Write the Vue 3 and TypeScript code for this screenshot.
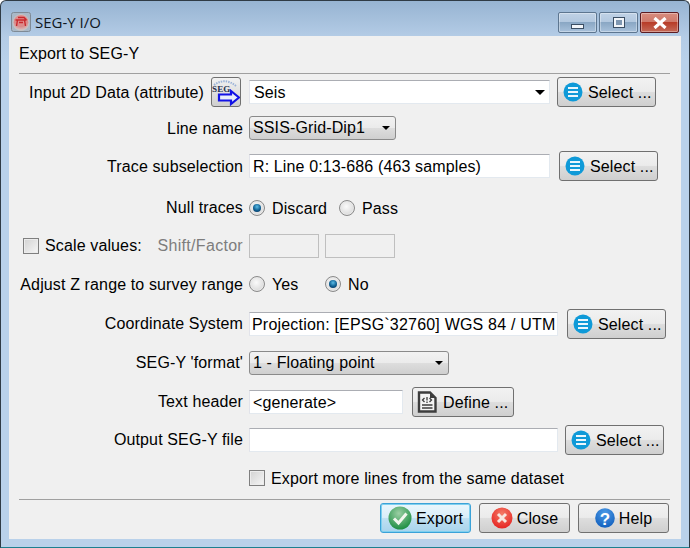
<script setup lang="ts">
const title = 'SEG-Y I/O'
</script>

<template>
  <div class="window">
    <header class="titlebar">
      <svg class="app-icon" width="20" height="20" viewBox="0 0 20 20">
        <defs>
          <radialGradient id="gApp" cx="50%" cy="30%" r="75%">
            <stop offset="0" stop-color="#e88f8f" />
            <stop offset="0.6" stop-color="#d98a8a" />
            <stop offset="1" stop-color="#d6d6d6" />
          </radialGradient>
        </defs>
        <rect x="0.5" y="0.5" width="19" height="19" rx="2" fill="#a9b8c7" stroke="#7f8a95" />
        <circle cx="10" cy="10.5" r="8" fill="url(#gApp)" stroke="#c4c4c4" />
        <path d="M4.5 8 L15.5 8 M6.5 8 L5.5 14 M13.5 8 L14.5 14 M8 10.5 L12 10.5 M7 5.5 L13 5.5 L15.5 8" stroke="#c8282c" stroke-width="1.4" fill="none" />
      </svg>
      <span class="title">{{ title }}</span>
      <div class="win-buttons">
        <div class="wb">
          <span class="min-glyph"></span>
        </div>
        <div class="wb">
          <span class="max-glyph"></span>
        </div>
        <div class="wb close">
          <svg width="16" height="12" viewBox="0 0 16 12">
            <path d="M2.5 1 L13.5 11 M13.5 1 L2.5 11" stroke="#fff" stroke-width="3.2" />
          </svg>
        </div>
      </div>
    </header>

    <main class="content">
      <div class="heading">Export to SEG-Y</div>
      <hr class="sep" />

      <div class="row first">
        <div class="label">
          <span class="low">Input 2D Data (attribute)</span>
          <div class="seg-btn">
            <svg width="30" height="30" viewBox="0 0 30 30">
              <path d="M3 8 Q14 0 25 9" stroke="#9db4d8" stroke-width="2" stroke-dasharray="1.5 1" fill="none" />
              <text x="1" y="15" class="seg-text">SEG</text>
              <path d="M8 17.5 H20 V14 L28 20.5 L20 27 V23.5 H8 Z" fill="#e8eefc" stroke="#1212e6" stroke-width="2.2" />
            </svg>
          </div>
        </div>
        <div class="combo w301">
          <span>Seis</span>
          <i class="caret"></i>
        </div>
        <button class="btn sel m7">
          <svg class="ico" width="20" height="20" viewBox="0 0 20 20">
            <circle cx="10" cy="10" r="9.5" fill="#0f9ad8" />
            <path d="M5 6 H15 M5 10 H15 M5 14 H15" stroke="#eaf7fd" stroke-width="2.2" />
          </svg>
          <span>Select ...</span>
        </button>
      </div>

      <div class="row mt10">
        <div class="label"><span class="low">Line name</span></div>
        <div class="dropdown w147">
          <span>SSIS-Grid-Dip1</span>
          <i class="caret small"></i>
        </div>
      </div>

      <div class="row mt12">
        <div class="label"><span class="low">Trace subselection</span></div>
        <div class="input w301">R: Line 0:13-686 (463 samples)</div>
        <button class="btn sel m9">
          <svg class="ico" width="20" height="20" viewBox="0 0 20 20">
            <circle cx="10" cy="10" r="9.5" fill="#0f9ad8" />
            <path d="M5 6 H15 M5 10 H15 M5 14 H15" stroke="#eaf7fd" stroke-width="2.2" />
          </svg>
          <span>Select ...</span>
        </button>
      </div>

      <div class="row mt16">
        <div class="label">Null traces</div>
        <div class="radio on"></div>
        <span class="opt w67">Discard</span>
        <div class="radio"></div>
        <span class="opt">Pass</span>
      </div>

      <div class="row mt12">
        <div class="label split">
          <div class="check-wrap">
            <div class="check"></div>
            <span>Scale values:</span>
          </div>
          <span class="muted">Shift/Factor</span>
        </div>
        <div class="input off w70"></div>
        <div class="input off w70 m6"></div>
      </div>

      <div class="row mt12">
        <div class="label"><span class="low">Adjust Z range to survey range</span></div>
        <div class="radio"></div>
        <span class="opt w53">Yes</span>
        <div class="radio on"></div>
        <span class="opt">No</span>
      </div>

      <div class="row mt14">
        <div class="label">Coordinate System</div>
        <div class="input w309 clip">Projection: [EPSG`32760] WGS 84 / UTM</div>
        <button class="btn sel m9">
          <svg class="ico" width="20" height="20" viewBox="0 0 20 20">
            <circle cx="10" cy="10" r="9.5" fill="#0f9ad8" />
            <path d="M5 6 H15 M5 10 H15 M5 14 H15" stroke="#eaf7fd" stroke-width="2.2" />
          </svg>
          <span>Select ...</span>
        </button>
      </div>

      <div class="row mt13">
        <div class="label">SEG-Y 'format'</div>
        <div class="dropdown w200">
          <span>1 - Floating point</span>
          <i class="caret small"></i>
        </div>
      </div>

      <div class="row mt13">
        <div class="label">Text header</div>
        <div class="input w154">&lt;generate&gt;</div>
        <button class="btn def m9">
          <svg class="ico" width="24" height="24" viewBox="0 0 24 24">
            <path d="M4 2.5 H15 L20.5 8 V21.5 H4 Z" fill="#f4f4f4" stroke="#3d3d3d" stroke-width="2.4" />
            <path d="M15 2 V8 H21" fill="#3d3d3d" />
            <path d="M9.5 8 L7.5 10 L9.5 12 M14.5 8 L16.5 10 L14.5 12 M12 7 V10.5 M12 11.5 V13 M7 15 H17.5 M7 18 H17.5" stroke="#3d3d3d" stroke-width="1.3" fill="none" />
          </svg>
          <span>Define ...</span>
        </button>
      </div>

      <div class="row mt12">
        <div class="label">Output SEG-Y file</div>
        <div class="input w309"></div>
        <button class="btn sel m7">
          <svg class="ico" width="20" height="20" viewBox="0 0 20 20">
            <circle cx="10" cy="10" r="9.5" fill="#0f9ad8" />
            <path d="M5 6 H15 M5 10 H15 M5 14 H15" stroke="#eaf7fd" stroke-width="2.2" />
          </svg>
          <span>Select ...</span>
        </button>
      </div>

      <div class="row mt12">
        <div class="label"></div>
        <div class="check"></div>
        <span class="check-text">Export more lines from the same dataset</span>
      </div>

      <hr class="sep lower" />

      <footer class="actions">
        <button class="btn foot default">
          <svg class="ico" width="24" height="24" viewBox="0 0 24 24">
            <defs>
              <radialGradient id="gGreen" cx="45%" cy="30%" r="75%">
                <stop offset="0" stop-color="#9ccfa4" />
                <stop offset="1" stop-color="#148a3c" />
              </radialGradient>
            </defs>
            <circle cx="12" cy="12" r="11.5" fill="url(#gGreen)" />
            <path d="M6 12.5 L10.5 17 L18.5 7.5" stroke="#f2f6ee" stroke-width="3" fill="none" />
          </svg>
          <span>Export</span>
        </button>
        <button class="btn foot">
          <svg class="ico" width="22" height="22" viewBox="0 0 22 22">
            <defs>
              <radialGradient id="gRed" cx="50%" cy="30%" r="75%">
                <stop offset="0" stop-color="#f47a66" />
                <stop offset="1" stop-color="#e5201f" />
              </radialGradient>
            </defs>
            <circle cx="11" cy="11" r="10.5" fill="url(#gRed)" />
            <path d="M7 7 L15 15 M15 7 L7 15" stroke="#f8e6df" stroke-width="3" />
          </svg>
          <span>Close</span>
        </button>
        <button class="btn foot">
          <svg class="ico" width="20" height="22" viewBox="0 0 20 22">
            <defs>
              <radialGradient id="gBlue" cx="50%" cy="25%" r="80%">
                <stop offset="0" stop-color="#4d9be6" />
                <stop offset="1" stop-color="#0e5cbc" />
              </radialGradient>
            </defs>
            <circle cx="10" cy="11" r="9.8" fill="url(#gBlue)" />
            <text x="10" y="17.5" class="q">?</text>
          </svg>
          <span>Help</span>
        </button>
      </footer>
    </main>
  </div>
</template>

<style>
html, body {
  margin: 0;
  background: #fff;
}
</style>

<style scoped>
.window {
  width: 690px;
  height: 548px;
  box-sizing: border-box;
  border: 1px solid #2f3b45;
  border-bottom-color: #1d7f8f;
  border-radius: 6px 6px 0 0;
  background: linear-gradient(#97b4d2 0, #b4cce6 36px, #b9d1ea 60px);
  font: 16px/20px "Liberation Sans", Arial, sans-serif;
  letter-spacing: 0.13px;
  color: #000;
  display: flex;
  flex-direction: column;
}
.titlebar {
  height: 35px;
  box-sizing: border-box;
  display: flex;
  align-items: flex-start;
  padding: 11px 10px 0 10px;
  flex: none;
}
.title {
  margin-left: 4px;
  font: 15px/20px "Open Sans", "Noto Sans", sans-serif;
  letter-spacing: 0;
  color: #10181f;
}
.win-buttons {
  margin-left: auto;
  display: flex;
  gap: 2px;
}
.wb {
  width: 39px;
  height: 21px;
  box-sizing: border-box;
  border: 1px solid #5d7690;
  border-radius: 2px;
  background: linear-gradient(#c0d2e6 0, #b3c8df 45%, #8aa7c4 50%, #a8c1db 100%);
  box-shadow: inset 0 0 0 1px rgba(255, 255, 255, 0.35);
  display: flex;
  align-items: center;
  justify-content: center;
}
.wb.close {
  border-color: #5c1c22;
  background: linear-gradient(#d88d7f 0, #cf7a6b 45%, #b83c28 50%, #c46a58 100%);
}
.min-glyph {
  width: 11px;
  height: 3px;
  margin-top: 7px;
  background: #f2f5f9;
  border: 1px solid #3b4e63;
}
.max-glyph {
  width: 6px;
  height: 5px;
  border: 2px solid #f2f5f9;
  outline: 1px solid #3b4e63;
  background: #7f97b1;
}
.content {
  margin: 0 8px 8px 8px;
  flex: 1;
  background: #f0f0f0;
  padding: 0 10px;
  box-sizing: border-box;
}
.heading {
  height: 37px;
  line-height: 36px;
}
.sep {
  margin: 0;
  border: 0;
  border-top: 1px solid #a0a0a0;
  width: 651px;
}
.sep.lower {
  margin-top: 8px;
}
.row {
  display: flex;
  align-items: center;
  height: 26px;
}
.first {
  margin-top: 5px;
}
.mt10 { margin-top: 10px; }
.mt12 { margin-top: 12px; }
.mt13 { margin-top: 13px; }
.mt14 { margin-top: 14px; }
.mt16 { margin-top: 16px; }
.m6 { margin-left: 6px; }
.m7 { margin-left: 7px; }
.m9 { margin-left: 9px; }
.label {
  width: 224px;
  margin-right: 6px;
  text-align: right;
  flex: none;
  display: flex;
  justify-content: flex-end;
  align-items: center;
  height: 22px;
  white-space: nowrap;
}
.low {
  padding-top: 2px;
}
.label.split {
  justify-content: space-between;
  padding-left: 4px;
  box-sizing: border-box;
}
.check-wrap {
  display: flex;
  align-items: center;
  gap: 6px;
}
.muted {
  color: #7d7d7d;
  letter-spacing: 0.3px;
}
.seg-btn {
  width: 30px;
  height: 30px;
  margin-left: 7px;
  margin-right: 2px;
  border: 1px solid #707070;
  border-radius: 3px;
  box-sizing: border-box;
  background: linear-gradient(#f2f2f2, #cfcfcf);
  overflow: hidden;
  flex: none;
}
.seg-btn svg {
  display: block;
  margin: -1px;
}
.seg-text {
  font: bold 9px "Liberation Serif", serif;
  fill: #27324f;
}
.input,
.combo {
  height: 24px;
  box-sizing: border-box;
  background: #fff;
  border: 1px solid #e3e9ef;
  border-top-color: #abadb3;
  border-left-color: #e2e3ea;
  padding: 0 3px;
  line-height: 23px;
  white-space: nowrap;
  overflow: hidden;
}
.combo {
  display: flex;
  align-items: center;
  justify-content: space-between;
  padding: 0 4px;
}
.clip {
  padding-left: 2px;
  letter-spacing: 0.2px;
}
.input.off {
  background: #f0f0f0;
  border: 1px solid #bfbfbf;
}
.w70 { width: 70px; }
.w154 { width: 154px; }
.w301 { width: 301px; }
.w309 { width: 309px; }
.w147 { width: 147px; }
.w200 { width: 200px; }
.caret {
  width: 0;
  height: 0;
  border-left: 5px solid transparent;
  border-right: 5px solid transparent;
  border-top: 5px solid #000;
  flex: none;
}
.caret.small {
  border-left-width: 4px;
  border-right-width: 4px;
  border-top-width: 4px;
}
.dropdown {
  height: 24px;
  box-sizing: border-box;
  border: 1px solid #8a8a8a;
  border-radius: 3px;
  background: linear-gradient(#f2f2f2 0, #ebebeb 48%, #dddddd 52%, #cfcfcf 100%);
  display: flex;
  align-items: center;
  justify-content: space-between;
  padding: 0 5px 0 3px;
}
.btn {
  height: 30px;
  box-sizing: border-box;
  border: 1px solid #707070;
  border-radius: 3px;
  background: linear-gradient(#f2f2f2 0, #ebebeb 48%, #dddddd 52%, #cfcfcf 100%);
  font: inherit;
  letter-spacing: inherit;
  color: #000;
  display: flex;
  align-items: center;
  padding: 0;
  flex: none;
  white-space: nowrap;
}
.btn .ico {
  flex: none;
}
.btn span {
  padding-top: 2px;
}
.sel {
  width: 99px;
  padding-left: 5px;
  gap: 5px;
}
.def {
  width: 102px;
  padding-left: 2px;
  gap: 4px;
}
.radio {
  width: 16px;
  height: 16px;
  box-sizing: border-box;
  border-radius: 50%;
  border: 1px solid #8a8a8a;
  background: radial-gradient(circle at 45% 40%, #fafafa 0, #dcdcdc 70%, #c4c4c4 100%);
  flex: none;
  box-shadow: 0 0 0 1px #e8e8e8 inset;
  position: relative;
}
.radio.on::after {
  content: "";
  position: absolute;
  left: 3px;
  top: 3px;
  width: 8px;
  height: 8px;
  border-radius: 50%;
  background: radial-gradient(circle at 50% 35%, #5cbce6 0, #0e5f92 55%, #08284e 100%);
}
.opt {
  margin-left: 7px;
  padding-top: 2px;
}
.w67 { width: 67px; }
.w53 { width: 53px; }
.check {
  width: 16px;
  height: 16px;
  box-sizing: border-box;
  border: 1px solid #7f7f7f;
  background: linear-gradient(135deg, #d2d2d2, #f6f6f6);
  box-shadow: inset 0 0 0 1px #ececec;
  flex: none;
}
.check-text {
  margin-left: 6px;
  padding-top: 2px;
}
.actions {
  display: flex;
  justify-content: flex-end;
  gap: 8px;
  margin-top: 3px;
  width: 650px;
}
.foot {
  width: 91px;
  justify-content: center;
  gap: 4px;
}
.foot.default {
  border: 1px solid #3ba2d8;
  box-shadow: inset 0 0 0 1px #7fd0ef;
  background: linear-gradient(#eaf6fc 0, #d9eef9 48%, #bfe0f2 52%, #a8d4ec 100%);
}
.q {
  font: bold 17px "Liberation Sans", sans-serif;
  fill: #fff;
  text-anchor: middle;
}
</style>
